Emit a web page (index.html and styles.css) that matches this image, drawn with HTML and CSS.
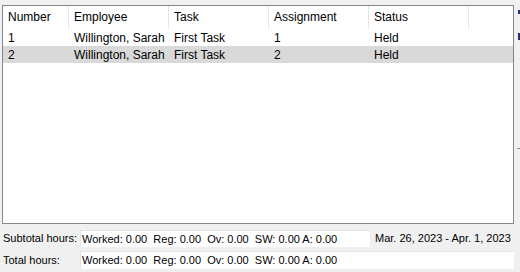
FILE: index.html
```html
<!DOCTYPE html>
<html lang="en">
  <head>
    <meta charset="UTF-8" />
    <title>Timesheet Assignments</title>
    <link rel="stylesheet" href="styles.css">
  </head>

  <body>
    <div class="panel">
      <div class="list">
        <div class="row head">
          <div class="cell c-num">Number</div>
          <div class="cell c-wide">Employee</div>
          <div class="cell c-wide">Task</div>
          <div class="cell c-wide">Assignment</div>
          <div class="cell c-wide">Status</div>
          <div class="cell c-fill"></div>
        </div>
        <div class="row">
          <div class="cell c-num">1</div>
          <div class="cell c-wide">Willington, Sarah</div>
          <div class="cell c-wide">First Task</div>
          <div class="cell c-wide">1</div>
          <div class="cell c-wide">Held</div>
        </div>
        <div class="row selected">
          <div class="cell c-num">2</div>
          <div class="cell c-wide">Willington, Sarah</div>
          <div class="cell c-wide">First Task</div>
          <div class="cell c-wide">2</div>
          <div class="cell c-wide">Held</div>
        </div>
      </div>

      <div class="totals">
        <div class="total-row">
          <span class="label">Subtotal hours:</span>
          <div class="field short">Worked: 0.00&nbsp; Reg: 0.00&nbsp; Ov: 0.00&nbsp; SW: 0.00 A: 0.00</div>
          <span class="range">Mar. 26, 2023 - Apr. 1, 2023</span>
        </div>
        <div class="total-row">
          <span class="label">Total hours:</span>
          <div class="field">Worked: 0.00&nbsp; Reg: 0.00&nbsp; Ov: 0.00&nbsp; SW: 0.00 A: 0.00</div>
        </div>
      </div>
    </div>

    <!-- edge of the neighbouring toolbar, cut off by the window -->
    <div class="edge">
      <span class="mark m1"></span>
      <span class="mark m2"></span>
      <span class="line"></span>
    </div>
  </body>
</html>
```

FILE: styles.css
```css
* {
  box-sizing: border-box;
  margin: 0;
  padding: 0;
}

body {
  font-family: "Liberation Sans", Arial, sans-serif;
  font-size: 12px;
  color: #000;
  background-color: #f0f0f0;
  width: 520px;
  height: 272px;
  overflow: hidden;
  position: relative;
}

.panel {
  display: flex;
  flex-direction: column;
  padding: 5px 6px 0 2px;
}

.list {
  height: 219px;
  border: 1px solid #828790;
  background: #fff;
}

.row {
  display: flex;
  height: 17px;
  align-items: center;
}

.row.head {
  height: 23px;
}

.row.selected {
  background-color: #d9d9d9;
}

.cell {
  padding-left: 5px;
  white-space: nowrap;
  overflow: hidden;
}

.c-num {
  width: 66px;
}

.c-wide {
  width: 100px;
}

.head .cell {
  height: 23px;
  line-height: 22px;
  border-right: 1px solid #e5e5e5;
}

.head .c-fill {
  flex: 1;
  border-right: none;
}

.totals {
  display: flex;
  flex-direction: column;
  gap: 4px;
  margin-top: 5px;
  font-size: 11px;
}

.total-row {
  display: flex;
  align-items: center;
  height: 18px;
  white-space: nowrap;
}

.label {
  flex: none;
  width: 78px;
  padding-left: 1px;
}

.field {
  flex: 1;
  height: 18px;
  line-height: 17px;
  padding-left: 1px;
  background: #fff;
  border-top: 1px solid #e3e3e3;
  border-left: 1px solid #e3e3e3;
}

.field.short {
  flex: none;
  width: 290px;
  height: 17px;
}

.range {
  flex: none;
  padding-left: 5px;
}

.edge {
  position: absolute;
  top: 0;
  right: 0;
  width: 3px;
  height: 272px;
}

.mark {
  position: absolute;
  right: 0;
  width: 2px;
  background: #2c2c6e;
}

.m1 {
  top: 10px;
  height: 4px;
}

.m2 {
  top: 33px;
  height: 7px;
}

.line {
  position: absolute;
  right: 0;
  top: 148px;
  width: 3px;
  height: 1px;
  background: #8a8a8a;
}
```
